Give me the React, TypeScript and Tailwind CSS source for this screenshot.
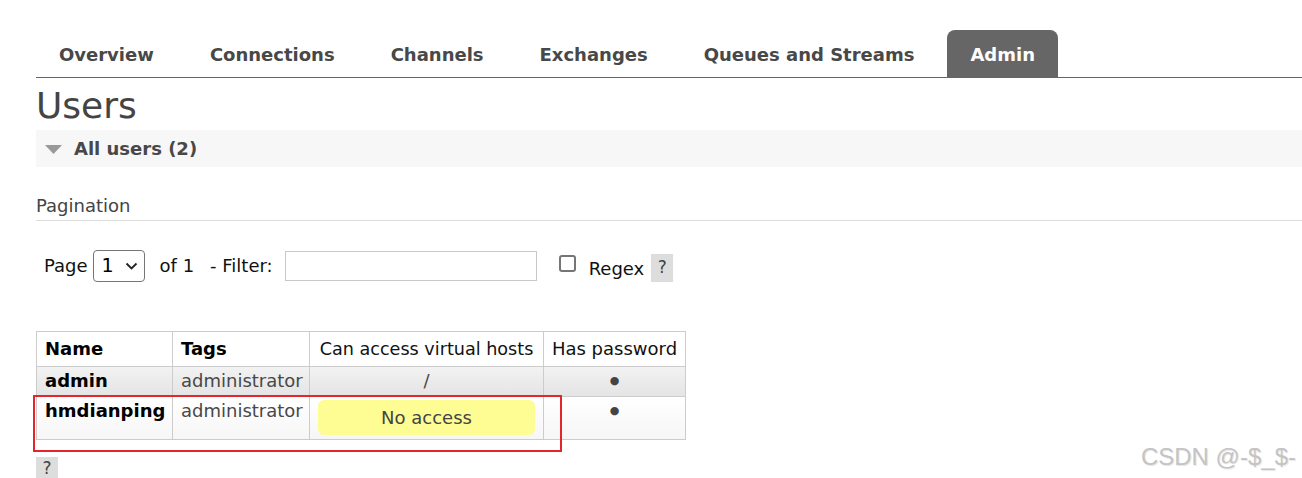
import React, { useState } from 'react';

const tabs = ['Overview', 'Connections', 'Channels', 'Exchanges', 'Queues and Streams', 'Admin'];

interface UserRow {
  name: string;
  tags: string;
  vhosts: string | null;
  hasPassword: boolean;
}

const users: UserRow[] = [
  { name: 'admin', tags: 'administrator', vhosts: '/', hasPassword: true },
  { name: 'hmdianping', tags: 'administrator', vhosts: null, hasPassword: true },
];

const HelpBox: React.FC<{ className?: string }> = ({ className = '' }) => (
  <span className={`flex w-[22px] items-center justify-center bg-[#dddddd] text-[17px] text-[#444] ${className}`}>?</span>
);

const App: React.FC = () => {
  const [filter, setFilter] = useState('');
  const [regex, setRegex] = useState(false);

  return (
    <div className="relative h-[478px] w-[1302px] overflow-hidden bg-white pl-9 font-['DejaVu_Sans',Verdana,sans-serif] text-[18px] text-[#484848]">
      {/* top tabs */}
      <nav className="mt-[30px] flex gap-[10px] border-b border-[#666]">
        {tabs.map(tab => (
          <div
            key={tab}
            className={`flex h-[47px] items-center px-[23px] pt-[2px] font-bold ${
              tab === 'Admin' ? 'rounded-t-[8px] bg-[#666] text-white' : 'text-[#484848]'
            }`}
          >
            {tab}
          </div>
        ))}
      </nav>

      <h1 className="mt-[6px] h-[43px] text-[36px] leading-[43px] font-normal text-[#444]">Users</h1>

      <div className="mt-[3px] flex h-[37px] items-center bg-[#f7f7f7] pl-[9px]">
        <svg width="17" height="10" viewBox="0 0 17 10" className="mt-[2px]">
          <path d="M0 0 H17 L8.5 9 Z" fill="#999" />
        </svg>
        <span className="ml-3 font-bold text-[#484848]">All users (2)</span>
      </div>

      <div className="mt-[28px] border-b border-[#dddddd] pb-[3px] leading-[22px] text-[#444]">Pagination</div>

      <div className="mt-[28px] flex h-[33px] items-center pl-2 text-[#111]">
        <span>Page</span>
        <div className="ml-[5px] flex h-[32px] w-[52px] items-center justify-between rounded-[4px] border border-[#767676] pl-[8px] pr-[6px]">
          <span className="text-[19px] text-[#000]">1</span>
          <svg width="13" height="8" viewBox="0 0 13 8">
            <path d="M1.5 1.5 L6.5 6.5 L11.5 1.5" fill="none" stroke="#222" strokeWidth="1.8" />
          </svg>
        </div>
        <span className="ml-[15px]">of 1</span>
        <span className="ml-[16px]">- Filter:</span>
        <input
          value={filter}
          onChange={e => setFilter(e.target.value)}
          className="ml-[12px] h-[30px] w-[252px] border border-[#c8c8c8] outline-none"
        />
        <input
          type="checkbox"
          checked={regex}
          onChange={e => setRegex(e.target.checked)}
          className="ml-[22px] mb-[4px] h-[17px] w-[17px] appearance-none rounded-[3px] border-2 border-[#767676] bg-white"
        />
        <span className="ml-[13px] mt-[5px]">Regex</span>
        <HelpBox className="ml-[7px] mt-[5px] h-[28px]" />
      </div>

      {/* users table */}
      <table className="mt-[49px] w-[650px] table-fixed border-collapse text-left whitespace-nowrap">
        <colgroup>
          <col className="w-[136px]" />
          <col className="w-[137px]" />
          <col className="w-[234px]" />
          <col className="w-[142px]" />
        </colgroup>
        <thead>
          <tr className="h-[35px] bg-white">
            <th className="border border-[#cccccc] px-2 py-0 leading-[22px] font-bold text-black">Name</th>
            <th className="border border-[#cccccc] px-2 py-0 leading-[22px] font-bold text-black">Tags</th>
            <th className="border border-[#cccccc] px-0 py-0 text-center text-[17.6px] leading-[22px] font-normal text-[#111]">Can access virtual hosts</th>
            <th className="border border-[#cccccc] px-0 py-0 text-center leading-[22px] font-normal text-[#111]">Has password</th>
          </tr>
        </thead>
        <tbody>
          {users.map((u, i) => (
            <tr
              key={u.name}
              className={
                i === 0
                  ? 'h-[30px] bg-gradient-to-b from-[#f2f2f2] to-[#e4e4e4]'
                  : 'h-[43px] bg-gradient-to-b from-[#ffffff] to-[#f6f6f6]'
              }
            >
              <td className="border border-[#cccccc] px-2 pt-[3px] pb-0 align-top leading-[22px] font-bold text-black">{u.name}</td>
              <td className="border border-[#cccccc] px-2 pt-[3px] pb-0 align-top leading-[22px]">{u.tags}</td>
              <td className="border border-[#cccccc] px-2 pt-[3px] pb-0 text-center align-top leading-[22px]">
                {u.vhosts ? (
                  u.vhosts
                ) : (
                  <div className="mb-[3px] flex h-[35px] items-center justify-center rounded-[6px] bg-[#fdfd94] text-[#444]">No access</div>
                )}
              </td>
              <td className="border border-[#cccccc] px-2 pt-[3px] pb-0 text-center align-top text-[11px] leading-[22px] text-[#444]">
                {u.hasPassword ? '●' : ''}
              </td>
            </tr>
          ))}
        </tbody>
      </table>

      <HelpBox className="mt-[17px] h-[22px] leading-[20px]" />

      {/* screenshot annotation */}
      <div className="absolute left-[33px] top-[395px] h-[57px] w-[529px] border-2 border-[#e3262b]" />

      {/* watermark */}
      <div className="absolute right-[6px] top-[439px] font-['Liberation_Sans',Arial,sans-serif] text-[24px] text-[#c4c4c4] [text-shadow:1px_1px_1px_#e6e6e6]">
        CSDN @-$_$-
      </div>
    </div>
  );
};

export default App;
